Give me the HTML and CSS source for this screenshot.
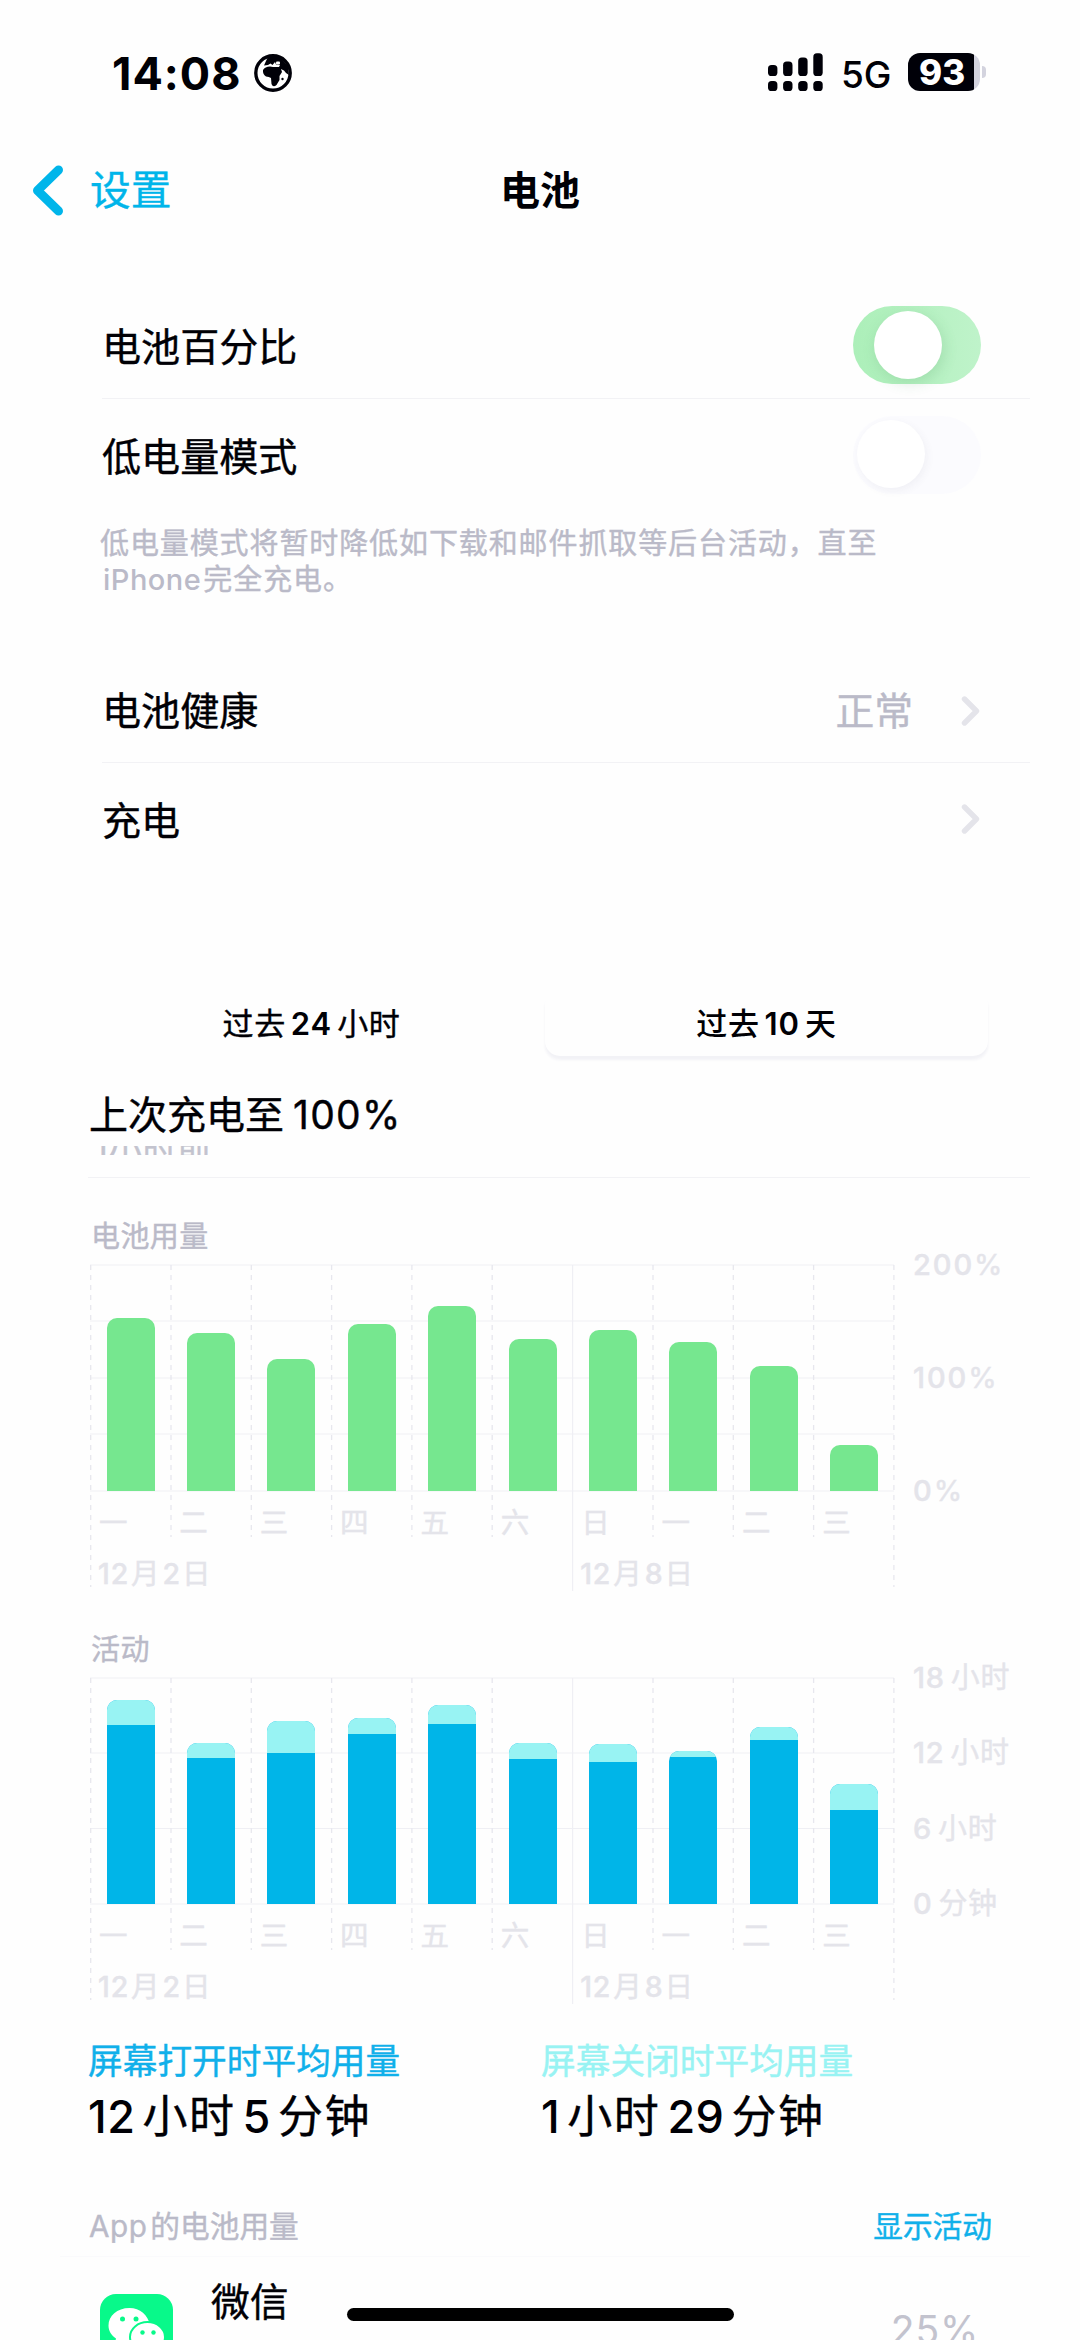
FILE: index.html
```html
<!DOCTYPE html>
<html lang="zh-CN">
<head>
<meta charset="utf-8">
<title>电池</title>
<link rel="stylesheet" href="styles.css">
</head>
<body>
<div class="screen">
  <header class="status">
    <div class="status-left">
      <span class="clock">14:08</span>
      <svg class="globe" viewBox="0 0 38 38">
        <circle cx="19" cy="19" r="17.2" fill="#fff" stroke="#000008" stroke-width="3.4"/>
        <path d="M12 7 L14 3 H26 L34 12 L35 21 L32 19 L30 16.5 L27 15 L28 18 L25.5 22 L25.5 26 L22.5 31 Q19 34 17.5 30 L17 24 Q15 22.5 12 22.5 Q8.5 20 9 16 Q11 12.5 16 12.5 L19 13 L25 13 L26 11 L22 10.5 L21 8 L18.5 11 L16.5 9.5 L14 11 L10 11.5 Z" fill="#000008"/>
        <rect x="22" y="7.4" width="4" height="3" rx="1" fill="#fff"/>
        <circle cx="28.5" cy="25" r="1.2" fill="#000008"/>
      </svg>
    </div>
    <div class="status-right">
      <svg class="signal" viewBox="0 0 56 38">
        <g fill="#000008">
          <rect x="0" y="12" width="9.4" height="11" rx="3.6"/>
          <rect x="15.1" y="8.6" width="9.4" height="14.4" rx="3.6"/>
          <rect x="30.2" y="4.4" width="9.4" height="18.6" rx="3.6"/>
          <rect x="45.3" y="0.3" width="9.4" height="22.7" rx="3.6"/>
          <rect x="0" y="28" width="9.4" height="10" rx="3.6"/>
          <rect x="15.1" y="28" width="9.4" height="10" rx="3.6"/>
          <rect x="30.2" y="28" width="9.4" height="10" rx="3.6"/>
          <rect x="45.3" y="28" width="9.4" height="10" rx="3.6"/>
        </g>
      </svg>
      <span class="network">5G</span>
      <div class="battery"><span>93</span></div>
      <i class="battery-tip"></i>
    </div>
  </header>

  <nav class="nav">
    <a class="back">
      <svg class="back-icon" viewBox="0 0 32 52"><path d="M26.5 5 L5.5 25.5 L26.5 46" fill="none" stroke="#00b5ea" stroke-width="9" stroke-linecap="round" stroke-linejoin="round"/></svg>
      <span>设置</span>
    </a>
    <h1>电池</h1>
    <span></span>
  </nav>

  <section class="group">
    <div class="row divided"><span class="label">电池百分比</span><i class="toggle on"></i></div>
    <div class="row low-power"><span class="label">低电量模式</span><i class="toggle off"></i></div>
  </section>
  <p class="note">低电量模式将暂时降低如下载和邮件抓取等后台活动，直至<br><span class="latin">iPhone</span>完全充电。</p>

  <section class="group">
    <div class="row divided health">
      <span class="label">电池健康</span>
      <span class="value">正常</span>
      <svg class="chevron" viewBox="0 0 20 32"><path d="M3.5 4 L15.5 16 L3.5 28" fill="none" stroke="#e4e4ea" stroke-width="5.4" stroke-linecap="round" stroke-linejoin="round"/></svg>
    </div>
    <div class="row charging">
      <span class="label">充电</span>
      <svg class="chevron" viewBox="0 0 20 32"><path d="M3.5 4 L15.5 16 L3.5 28" fill="none" stroke="#e4e4ea" stroke-width="5.4" stroke-linecap="round" stroke-linejoin="round"/></svg>
    </div>
  </section>

  <div class="segments">
    <div class="segment">过去<b>24</b>小时</div>
    <div class="segment selected">过去<b>10</b>天</div>
  </div>

  <section class="last-charge">
    <div class="last-title">上次充电至<span>100%</span></div>
    <div class="last-time"><span>1小时前</span></div>
  </section>

  <section class="chart usage">
    <h2>电池用量</h2>
    <div class="chart-body">
      <div class="plot">
        <svg class="grid" viewBox="0 0 806 328">
          <g stroke="#efeff4" stroke-width="1.2">
            <path d="M0 1H804M0 57H804M0 114H804M0 170H804M0 227H804"/>
            <path d="M482.6 1V327"/>
          </g>
          <g stroke="#e7e7ee" stroke-width="1.3" stroke-dasharray="5 5">
            <path d="M.7 1V323M803.9 1V323"/>
            <path d="M81 1V273M161.3 1V273M241.6 1V273M321.9 1V273M402.2 1V273M563 1V273M643.3 1V273M723.6 1V273"/>
          </g>
        </svg>
        <div class="bars">
          <i style="height:173px"></i><i style="height:158px"></i><i style="height:132px"></i><i style="height:167px"></i><i style="height:185px"></i><i style="height:152px"></i><i style="height:161px"></i><i style="height:149px"></i><i style="height:125px"></i><i style="height:46px"></i>
        </div>
        <div class="days"><span>一</span><span>二</span><span>三</span><span>四</span><span>五</span><span>六</span><span>日</span><span>一</span><span>二</span><span>三</span></div>
        <div class="dates"><span><b>12</b>月<b>2</b>日</span><span><b>12</b>月<b>8</b>日</span></div>
      </div>
      <div class="scale"><span><b>200</b>%</span><span><b>100</b>%</span><span><b>0</b>%</span></div>
    </div>
  </section>

  <section class="chart activity">
    <h2>活动</h2>
    <div class="chart-body">
      <div class="plot">
        <svg class="grid" viewBox="0 0 806 328">
          <g stroke="#efeff4" stroke-width="1.2">
            <path d="M0 1H804M0 76H804M0 151.5H804M0 227H804"/>
            <path d="M482.6 1V327"/>
          </g>
          <g stroke="#e7e7ee" stroke-width="1.3" stroke-dasharray="5 5">
            <path d="M.7 1V323M803.9 1V323"/>
            <path d="M81 1V273M161.3 1V273M241.6 1V273M321.9 1V273M402.2 1V273M563 1V273M643.3 1V273M723.6 1V273"/>
          </g>
        </svg>
        <div class="bars">
          <i style="height:204px"><u style="height:25px"></u></i><i style="height:161px"><u style="height:15px"></u></i><i style="height:183px"><u style="height:32px"></u></i><i style="height:186px"><u style="height:16px"></u></i><i style="height:199px"><u style="height:19px"></u></i><i style="height:161px"><u style="height:16px"></u></i><i style="height:160px"><u style="height:18px"></u></i><i style="height:153px"><u style="height:6px"></u></i><i style="height:177px"><u style="height:13px"></u></i><i style="height:120px"><u style="height:26px"></u></i>
        </div>
        <div class="days"><span>一</span><span>二</span><span>三</span><span>四</span><span>五</span><span>六</span><span>日</span><span>一</span><span>二</span><span>三</span></div>
        <div class="dates"><span><b>12</b>月<b>2</b>日</span><span><b>12</b>月<b>8</b>日</span></div>
      </div>
      <div class="scale"><span><b>18</b>小时</span><span><b>12</b>小时</span><span><b>6</b>小时</span><span><b>0</b>分钟</span></div>
    </div>
  </section>

  <section class="averages">
    <div class="average on-screen"><h3>屏幕打开时平均用量</h3><p><b>12</b>小时<b>5</b>分钟</p></div>
    <div class="average off-screen"><h3>屏幕关闭时平均用量</h3><p><b>1</b>小时<b>29</b>分钟</p></div>
  </section>

  <div class="apps-head"><span><b>App</b>的电池用量</span><a>显示活动</a></div>
  <div class="app-row">
    <svg class="wechat" viewBox="0 0 73 73">
      <rect width="73" height="73" rx="16" fill="#08f98a"/>
      <path d="M29.5 14 C17 14 8.5 22 8.5 31.5 C8.5 37 11.5 41.5 16 44.5 L14.5 51 L21 47.5 C24 48.5 27 48.8 30 48.6 L50 31 C48 21 40 14 29.5 14Z" fill="#fff"/>
      <ellipse cx="47.5" cy="43" rx="17.5" ry="15" fill="#fff" stroke="#08f98a" stroke-width="2"/>
      <g fill="#08f98a"><circle cx="22.5" cy="25" r="2.5"/><circle cx="36" cy="25" r="2.5"/><circle cx="42.5" cy="38.5" r="2.2"/><circle cx="53.5" cy="38.5" r="2.2"/></g>
    </svg>
    <div class="app-text"><span class="app-name">微信</span><span class="app-sub">屏幕</span></div>
    <span class="app-value">25%</span>
  </div>
  <div class="home-indicator"></div>
</div>
</body>
</html>
```
FILE: styles.css
```css
* { box-sizing: border-box; margin: 0; padding: 0; }
body {
  width: 1080px;
  height: 2340px;
  overflow: hidden;
  background: #fefefe;
  color: #000005;
  font-family: Inter, "Noto Sans CJK SC", sans-serif;
  -webkit-text-stroke: 0.4px;
}
i { font-style: normal; display: block; }
b { font-weight: inherit; }
h1, h2, h3 { font-weight: 400; }

.screen { position: relative; height: 2340px; overflow: hidden; display: flex; flex-direction: column; }
.screen > * { flex: none; }

.status { height: 110px; padding: 53px 94px 0 112px; display: flex; justify-content: space-between; -webkit-text-stroke: 0; }
.status-left, .status-right { height: 40px; display: flex; align-items: center; }
.clock { width: 142px; padding-top: 1px; font-size: 45px; font-weight: 700; line-height: 40px; letter-spacing: 1px; }
.globe { width: 38px; height: 38px; }
.status-right { height: 38px; }
.signal { width: 56px; height: 38px; }
.network { width: 67px; margin-left: 17px; padding-top: 6px; font-size: 37px; font-weight: 500; line-height: 36px; }
.battery { width: 72px; height: 38px; border-radius: 12px; background: linear-gradient(90deg, #000008 66px, #d3d3de 66px); }
.battery span { display: block; padding-left: 11px; color: #fff; font-size: 35px; line-height: 39px; font-weight: 800; }
.battery-tip { width: 4px; height: 12px; margin-left: 2px; border-radius: 0 6px 6px 0; background: #d3d3de; }

.nav { height: 160px; padding: 1px 32px 0; display: grid; grid-template-columns: 1fr auto 1fr; align-items: center; }
.back { display: flex; align-items: center; gap: 26px; color: #00b5ea; font-size: 40.7px; line-height: 50px; }
.back-icon { width: 32px; height: 52px; }
.nav h1 { font-size: 40px; font-weight: 700; line-height: 50px; -webkit-text-stroke: 0; }

.group { padding: 0 50px 0 102px; }
.row { height: 104px; display: flex; align-items: center; padding-right: 49px; }
.nav + .group { padding-top: 25px; }
.divided { border-bottom: 1.5px solid #f2f2f5; }
.low-power { height: 115px; }
.label { flex: 1; font-size: 39.1px; line-height: 46px; }
.toggle { width: 128px; height: 78px; margin-bottom: 3px; border-radius: 39px; }
.toggle::after { content: ""; display: block; width: 68px; height: 68px; border-radius: 34px; background: #fff; }
.toggle.on { padding: 5px 0 0 21px; background: linear-gradient(90deg, #acefb9, #bff3ca); }
.toggle.on::after { box-shadow: 2px 4px 14px rgba(60, 140, 80, .18); }
.toggle.off { padding: 4px; background: #fbfbfe; }
.toggle.off::after { box-shadow: 2px 3px 8px rgba(60, 60, 100, .06); }

.note { height: 145px; padding: 12px 100px 0; color: #babac8; font-size: 29px; line-height: 35.6px; letter-spacing: 0.9px; white-space: nowrap; }
.latin { margin: 0 2px 0 3px; font-weight: 500; letter-spacing: 0.5px; -webkit-text-stroke: 0; }

.health { height: 104px; }
.charging { height: 116px; }
.charging .chevron { margin-bottom: 4px; }
.value { color: #babac8; font-size: 38.8px; line-height: 46px; margin-right: 48px; }
.chevron { width: 20px; height: 32px; }

.segments { height: 67px; margin-top: 111px; padding: 0 92px 0 90px; display: grid; grid-template-columns: 443px 443px; gap: 12px; }
.segment { height: 66px; border-radius: 15px; text-align: center; font-size: 31px; line-height: 68px; letter-spacing: 0.6px; }
.segment b { margin: 0 5px; font-weight: 600; letter-spacing: 1px; -webkit-text-stroke: 0; }
.selected { font-weight: 500; box-shadow: 0 4px 3px #f2f2f6; -webkit-text-stroke: 0; }

.last-charge { height: 121px; margin: 0 50px 0 88px; padding-top: 35px; border-bottom: 1.5px solid #f2f2f5; }
.last-title { height: 54px; padding-left: 1px; font-size: 39px; line-height: 46px; white-space: nowrap; }
.last-title span { margin-left: 9px; letter-spacing: 1.3px; }
.last-time { height: 9px; padding-left: 6px; overflow: hidden; color: #c3c3ce; font-size: 34px; line-height: 8px; letter-spacing: 0.5px; }
.last-time span { display: block; }

.chart { height: 413px; padding-left: 90px; }
.chart h2 { height: 86px; padding: 39px 0 0 1px; color: #babac8; font-size: 29px; line-height: 40px; letter-spacing: 0.4px; }
.chart-body { display: flex; }
.plot { width: 806px; height: 328px; display: grid; grid-template: 227px 64px 37px / 806px; }
.grid { grid-area: 1 / 1 / 4 / 2; width: 806px; height: 328px; }
.bars { grid-area: 1 / 1; width: 805px; padding-left: 0.6px; display: grid; grid-template-columns: repeat(10, 80.37px); align-items: end; justify-items: center; }
.bars i { width: 48px; border-radius: 10px 10px 0 0; overflow: hidden; background: #76e78f; }
.activity .bars i { background: #00b5e8; }
.bars u { display: block; background: #98f3f3; }
.days { grid-area: 2 / 1; display: grid; grid-template-columns: repeat(10, 80.37px); color: #e4e4ea; font-size: 28.5px; line-height: 63px; }
.days span { padding-left: 9px; }
.dates { grid-area: 3 / 1; display: grid; grid-template-columns: 482.2px 1fr; color: #e4e4ea; font-size: 28.5px; line-height: 37px; }
.dates span { padding-left: 8px; }
.dates b { font-weight: 500; letter-spacing: 0.8px; }
.dates b:first-child { margin-right: 2px; }
.dates b:last-child { margin: 0 1px 0 3px; }
.scale { height: 266px; margin: -19px 0 0 17px; display: flex; flex-direction: column; justify-content: space-between; color: #e4e4ea; font-size: 29px; line-height: 40px; letter-spacing: 1.9px; white-space: nowrap; }
.scale b { font-weight: 500; }
.activity .scale { letter-spacing: 0.7px; }
.activity .scale b { margin-right: 6px; }

.averages { height: 166px; padding: 32px 0 0 88px; display: grid; grid-template-columns: 453px 1fr; }
.average h3 { font-size: 34.7px; line-height: 50px; margin-bottom: 1px; }
.average p { font-size: 45px; line-height: 60px; letter-spacing: 1.6px; white-space: nowrap; }
.average b { font-weight: 500; margin: 0 7px; letter-spacing: 0.5px; -webkit-text-stroke: 0; }
.average b:first-child { margin-left: 0; }
.on-screen h3 { color: #10b0ea; }
.off-screen h3 { color: #98f3f3; }

.apps-head { height: 67px; margin: 20px 50px 0 60px; padding: 16px 38px 0 29px; display: flex; justify-content: space-between; border-bottom: 1px solid #fafafc; color: #babac8; font-size: 29.7px; line-height: 40px; }
.apps-head b { letter-spacing: 0.5px; margin-right: 3px; }
.apps-head a { color: #10b0ea; }
.app-row { height: 84px; padding: 0 101px 0 100px; display: flex; overflow: hidden; }
.wechat { flex: none; width: 73px; height: 73px; margin-top: 37px; }
.app-text { flex: 1; padding: 22px 0 0 38px; display: flex; flex-direction: column; }
.app-name { font-size: 38.8px; line-height: 46px; }
.app-sub { font-size: 27px; line-height: 40px; margin-top: 10px; color: #c9c9d3; }
.app-value { padding-top: 50px; color: #c3c3ce; font-size: 39px; line-height: 46px; letter-spacing: 0.8px; -webkit-text-stroke: 0; }
.home-indicator { position: absolute; left: 347px; top: 2308px; width: 387px; height: 13px; border-radius: 7px; background: #000; }
```
